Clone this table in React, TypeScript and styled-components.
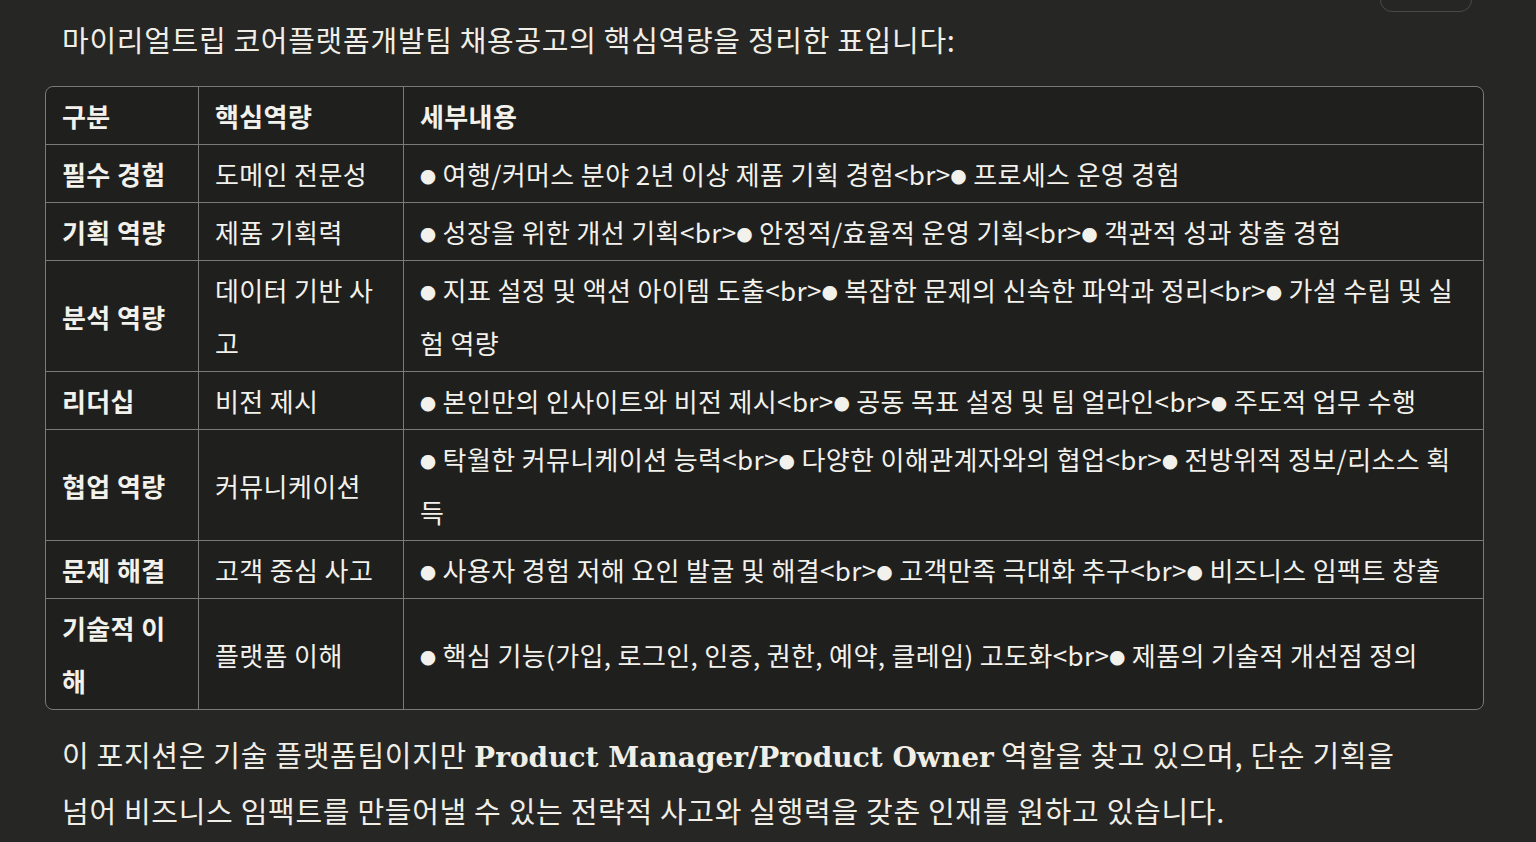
import styled, { createGlobalStyle } from "styled-components";

const GlobalStyle = createGlobalStyle`
  html, body {
    margin: 0;
    padding: 0;
    background: #262624;
  }
  body {
    font-family: "Noto Sans CJK KR", "Noto Sans", sans-serif;
    color: #f0eee6;
    overflow: hidden;
  }
`;

const rows: { label: string; skill: string; detail: string }[] = [
  {
    label: "필수 경험",
    skill: "도메인 전문성",
    detail: "● 여행/커머스 분야 2년 이상 제품 기획 경험<br>● 프로세스 운영 경험",
  },
  {
    label: "기획 역량",
    skill: "제품 기획력",
    detail: "● 성장을 위한 개선 기획<br>● 안정적/효율적 운영 기획<br>● 객관적 성과 창출 경험",
  },
  {
    label: "분석 역량",
    skill: "데이터 기반 사고",
    detail:
      "● 지표 설정 및 액션 아이템 도출<br>● 복잡한 문제의 신속한 파악과 정리<br>● 가설 수립 및 실험 역량",
  },
  {
    label: "리더십",
    skill: "비전 제시",
    detail: "● 본인만의 인사이트와 비전 제시<br>● 공동 목표 설정 및 팀 얼라인<br>● 주도적 업무 수행",
  },
  {
    label: "협업 역량",
    skill: "커뮤니케이션",
    detail:
      "● 탁월한 커뮤니케이션 능력<br>● 다양한 이해관계자와의 협업<br>● 전방위적 정보/리소스 획득",
  },
  {
    label: "문제 해결",
    skill: "고객 중심 사고",
    detail: "● 사용자 경험 저해 요인 발굴 및 해결<br>● 고객만족 극대화 추구<br>● 비즈니스 임팩트 창출",
  },
  {
    label: "기술적 이해",
    skill: "플랫폼 이해",
    detail: "● 핵심 기능(가입, 로그인, 인증, 권한, 예약, 클레임) 고도화<br>● 제품의 기술적 개선점 정의",
  },
];

// the bullet glyph is drawn smaller than the full-width CJK one
const renderDetail = (text: string) =>
  text.split("●").map((part, i) => (
    <span key={i}>
      {i > 0 && <Bullet>●</Bullet>}
      {part}
    </span>
  ));

const App = () => {
  return (
    <Page>
      <GlobalStyle />
      <CopyButton />
      <Paragraph>마이리얼트립 코어플랫폼개발팀 채용공고의 핵심역량을 정리한 표입니다:</Paragraph>
      <TableWrap>
        <Table>
          <colgroup>
            <col style={{ width: 153 }} />
            <col style={{ width: 205 }} />
            <col />
          </colgroup>
          <thead>
            <tr>
              <HeadCell>구분</HeadCell>
              <HeadCell>핵심역량</HeadCell>
              <HeadCell>세부내용</HeadCell>
            </tr>
          </thead>
          <tbody>
            {rows.map((r) => (
              <tr key={r.label}>
                <Cell $bold>{r.label}</Cell>
                <Cell>{r.skill}</Cell>
                <Cell>{renderDetail(r.detail)}</Cell>
              </tr>
            ))}
          </tbody>
        </Table>
      </TableWrap>
      <Paragraph>
        이 포지션은 기술 플랫폼팀이지만 <strong>Product Manager/Product Owner</strong> 역할을 찾고
        있으며, 단순 기획을 넘어 비즈니스 임팩트를 만들어낼 수 있는 전략적 사고와 실행력을 갖춘
        인재를 원하고 있습니다.
      </Paragraph>
    </Page>
  );
};

export default App;

const Page = styled.div`
  position: relative;
  width: 1439px;
  padding: 13px 0 0 45px;
  display: flex;
  flex-direction: column;
  gap: 20px;
`;

const CopyButton = styled.div`
  position: absolute;
  top: -30px;
  left: 1380px;
  width: 92px;
  height: 42px;
  border: 1px solid #4a4a47;
  border-radius: 12px;
  box-sizing: border-box;
`;

const Paragraph = styled.p`
  margin: 0;
  padding: 0 0 0 17px;
  max-width: 1360px;
  font-size: 29px;
  letter-spacing: 0.7px;
  line-height: 53px;
  color: #f0eee6;
  font-family: "Noto Sans CJK KR", "Noto Sans", sans-serif;

  strong {
    font-weight: 700;
    font-size: 28px;
    letter-spacing: 0;
    font-family: "DejaVu Serif", "Liberation Serif", serif;
  }

  &:last-child {
    margin-top: -2px;
  }
`;

const TableWrap = styled.div`
  border: 1px solid #7a7a76;
  border-radius: 8px;
  overflow: hidden;
  background: #1f1f1e;
`;

const Table = styled.table`
  width: 100%;
  table-layout: fixed;
  border-collapse: separate;
  border-spacing: 0;
  font-size: 26px;
  letter-spacing: 0.38px;
  line-height: 53px;
  color: #f2f1ec;

  tr:last-child td {
    border-bottom: none;
  }
`;

const HeadCell = styled.th`
  text-align: left;
  font-weight: 700;
  padding: 2px 16px;
  border-right: 1px solid #7a7a76;
  border-bottom: 1px solid #7a7a76;
  vertical-align: middle;

  &:last-child {
    border-right: none;
  }
`;

const Cell = styled.td<{ $bold?: boolean }>`
  padding: 2px 16px;
  font-weight: ${({ $bold }) => ($bold ? 700 : 400)};
  border-right: 1px solid #7a7a76;
  border-bottom: 1px solid #7a7a76;
  vertical-align: middle;
  word-break: break-all;

  &:last-child {
    border-right: none;
  }
`;

const Bullet = styled.span`
  font-size: 16px;
  line-height: 0;
  vertical-align: 2px;
`;
